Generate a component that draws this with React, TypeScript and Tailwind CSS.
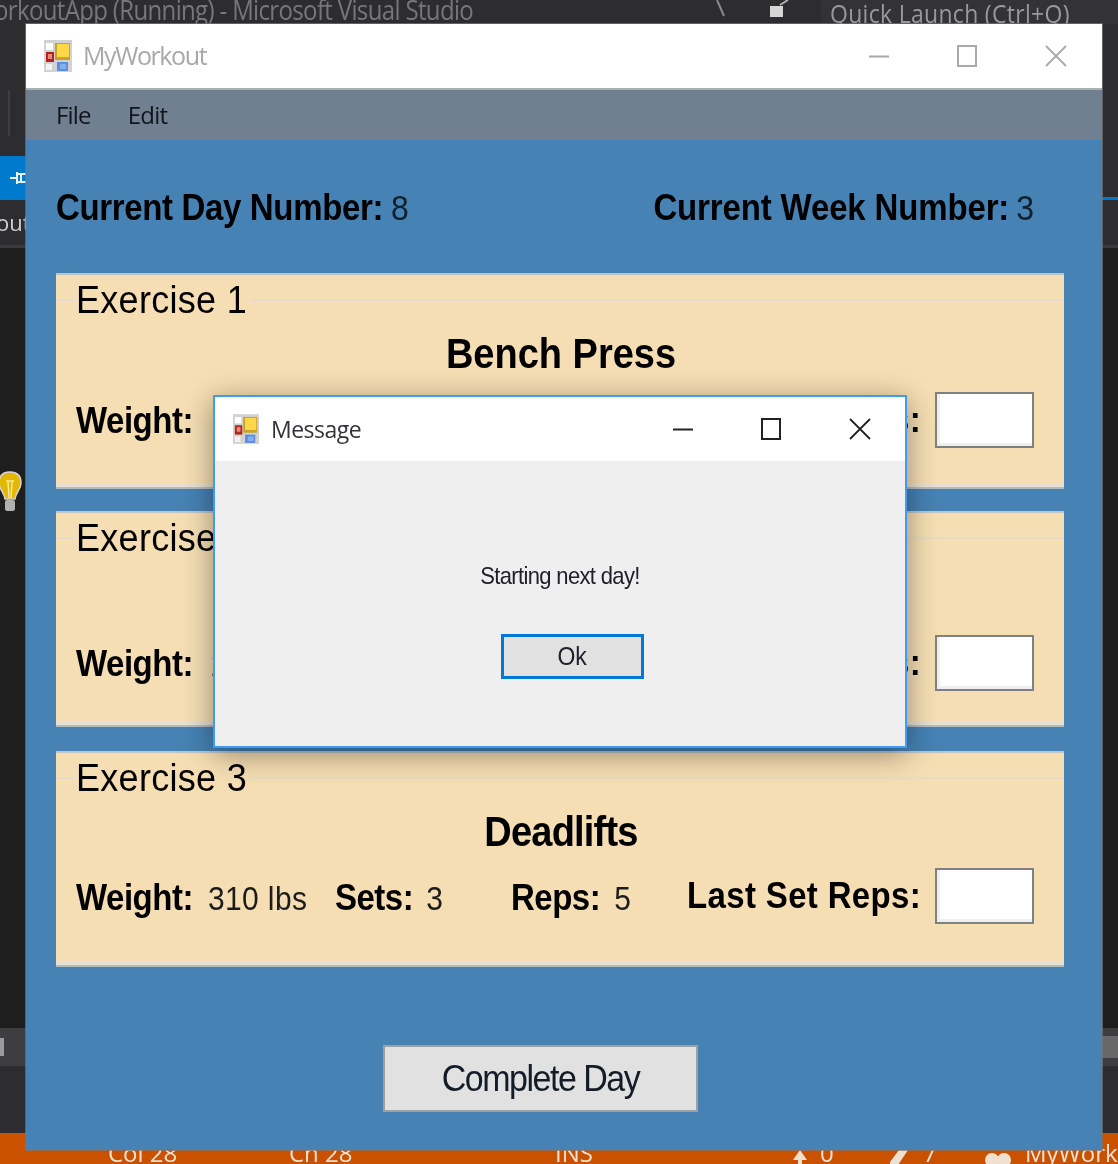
import React from "react";

const sans = "font-['Liberation_Sans',Arial,sans-serif]";
const segoe = "font-['Open_Sans','Noto_Sans',sans-serif]";
const tall = "inline-block scale-y-[1.1]";

function AppIcon({ className }: { className?: string }) {
  return (
    <svg viewBox="0 0 28 32" className={className}>
      <rect x="0" y="0" width="28" height="32" fill="#d2d2d2" />
      <rect x="2" y="3" width="7" height="7" fill="#ffffff" />
      <rect x="2" y="12" width="8" height="10" fill="#b3241c" />
      <rect x="4" y="14" width="4" height="5" fill="#e98a7c" />
      <rect x="2" y="24" width="6" height="6" fill="#f2f2f2" />
      <rect x="11" y="3" width="15" height="17" fill="#c9a227" />
      <rect x="13" y="4" width="12" height="13" fill="#ffd84a" />
      <rect x="13" y="22" width="11" height="9" fill="#5c8fe0" />
      <rect x="16" y="24" width="6" height="5" fill="#86aef0" />
    </svg>
  );
}

function WinControls({ dark }: { dark?: boolean }) {
  const c = dark ? "#222222" : "#a9a9a9";
  return (
    <div className="flex items-center">
      <svg viewBox="0 0 22 22" className="w-[22px] h-[22px]">
        <path d="M1 11.5H21" stroke={c} strokeWidth="2" />
      </svg>
      <svg viewBox="0 0 22 24" className="ml-[66px] w-[22px] h-[24px]">
        <rect x="2" y="2" width="18" height="20" fill="none" stroke={c} strokeWidth="2" />
      </svg>
      <svg viewBox="0 0 22 24" className="ml-[67px] w-[22px] h-[24px]">
        <path d="M1 2L21 22M21 2L1 22" stroke={c} strokeWidth="1.8" />
      </svg>
    </div>
  );
}

function Cell({ w, label, value, gap, top }: { w: string; label: string; value: string; gap: string; top: string }) {
  return (
    <div className={`flex items-baseline shrink-0 ${top} ${w}`}>
      <span className={`font-bold text-[33px] tracking-[-0.5px] text-black ${tall}`}>{label}</span>
      <span className={`text-[30px] tracking-[0.4px] text-[#1c1c1c] ${gap} ${tall}`}>{value}</span>
    </div>
  );
}

type Ex = {
  n: number;
  name: string;
  weight: string;
  sets: string;
  reps: string;
  rowTop: string;
  mb: string;
  wGap: string;
  track: string;
  top: string;
};

function ExerciseCard({ n, name, weight, sets, reps, rowTop, mb, wGap, track, top }: Ex) {
  return (
    <section
      className={`h-[216px] bg-[#f5deb3] border-t-2 border-t-[#bfc5c4] border-b-2 border-b-[#b5bcc0] shadow-[inset_0_-3px_0_#e8e0d0] flex flex-col ${mb}`}
    >
      <div className="flex items-center h-[50px]">
        <div className="w-[20px] h-[2px] bg-[#e6dccb]" />
        <span className={`text-[36px] leading-[50px] text-black tracking-[0.3px] ${tall}`}>Exercise {n}</span>
        <div className="flex-1 ml-[3px] h-[2px] bg-[#e6dccb]" />
      </div>
      <div className={`h-[54px] mt-[2px] pl-[2px] flex items-center justify-center font-bold text-[38px] leading-[54px] text-black ${track}`}>
        <span className={tall}>{name}</span>
      </div>
      <div className={`flex items-center pl-[20px] ${rowTop}`}>
        <Cell w="w-[259px]" label="Weight:" value={weight} gap={wGap} top={top} />
        <Cell w="w-[176px]" label="Sets:" value={sets} gap="ml-[13px]" top={top} />
        <Cell w="w-[176px]" label="Reps:" value={reps} gap="ml-[14px]" top={top} />
        <span className={`font-bold text-[33px] tracking-[0.35px] text-black w-[248px] shrink-0 whitespace-nowrap ${tall}`}>Last Set Reps:</span>
        <div className="w-[99px] h-[56px] bg-white border-2 border-[#808080] shadow-[inset_3px_-3px_0_#efefef] shrink-0" />
      </div>
    </section>
  );
}

function VsBackground() {
  return (
    <div className={`flex flex-col h-[1164px] overflow-hidden ${segoe}`}>
      <div className="h-[24px] bg-[#2d2d30] flex items-start overflow-hidden text-[#77777a] text-[24px] leading-[26px] whitespace-nowrap">
        <span className={`w-[716px] shrink-0 ml-[-6px] -mt-[3px] tracking-[-0.65px] ${tall}`}>orkoutApp (Running) - Microsoft Visual Studio</span>
        <svg viewBox="0 0 10 18" className="w-[10px] h-[18px] ml-[6px] shrink-0">
          <path d="M1 0L8 16" stroke="#8a8a8a" strokeWidth="2" />
        </svg>
        <svg viewBox="0 0 22 18" className="w-[22px] h-[18px] ml-[42px] shrink-0">
          <path d="M2 6h13v11H2z" fill="#d6d6d6" />
          <path d="M12 5L20 0" stroke="#b0b0b0" strokeWidth="2" />
        </svg>
        <div className="flex-1 h-full bg-[#333337] pl-[9px] ml-[31px] text-[#99999c] text-[23px] tracking-[0.3px] overflow-hidden">
          <span className={`-mt-[6px] ${tall}`}>Quick Launch (Ctrl+Q)</span>
        </div>
      </div>
      <div className="h-[132px] bg-[#2d2d30] pl-[8px] pt-[66px]">
        <div className="w-[2px] h-[46px] bg-[#3e3e42]" />
      </div>
      <div className="h-[44px] bg-[#2d2d30] flex justify-between">
        <div className="w-[26px] bg-[#007acc] flex items-center justify-end">
          <svg viewBox="0 0 16 16" className="w-[16px] h-[16px]">
            <path d="M0 8H7" stroke="#e8f2fa" strokeWidth="2" />
            <path d="M7 2V14M7 4H16M7 12H16M11 4V12" stroke="#e8f2fa" strokeWidth="2" fill="none" />
          </svg>
        </div>
        <div className="w-[17px] self-end h-[3px] bg-[#007acc]" />
      </div>
      <div className="h-[48px] bg-[#2d2d30] border-b-[3px] border-b-[#3a3a3d] text-[#d0d0d0] text-[22px] leading-[44px] whitespace-nowrap overflow-hidden">
        <span className="ml-[-4px]">out</span>
      </div>
      <div className="h-[780px] bg-[#1e1e1e] pt-[223px]">
        <svg viewBox="0 0 24 42" className="w-[24px] h-[42px] -ml-[2px]">
          <path d="M12 1C4 1 1 6 1 12c0 6 5 9 6 16h10c1-7 6-10 6-16 0-6-3-11-11-11z" fill="#e5b800" stroke="#d4d4d4" strokeWidth="1.5" />
          <path d="M8 10h8M10 10l1 17M14 10l-1 17" stroke="#f8e8a0" strokeWidth="1.5" fill="none" />
          <rect x="7" y="29" width="10" height="11" rx="2" fill="#b0b0b0" />
        </svg>
      </div>
      <div className="h-[38px] bg-[#3e3e42] flex justify-between items-center">
        <div className="w-[4px] h-[18px] bg-[#9a9a9a]" />
        <div className="w-[17px] h-[22px] bg-[#686868]" />
      </div>
      <div className="h-[67px] bg-[#2d2d30]" />
      <div className="flex-1 bg-[#ca5100] text-[#f0e0d0] text-[24px] leading-[30px] whitespace-nowrap flex items-start pt-[5px] overflow-hidden">
        <span className="ml-[108px] w-[181px] shrink-0">Col 28</span>
        <span className="w-[266px] shrink-0">Ch 28</span>
        <span className="w-[237px] shrink-0">INS</span>
        <div className="w-[97px] shrink-0 flex items-start gap-[12px]">
          <svg viewBox="0 0 16 30" className="w-[16px] h-[30px]">
            <path d="M8 12L15 22H10V30H6V22H1z" fill="#f0e0d0" />
          </svg>
          <span>0</span>
        </div>
        <div className="w-[95px] shrink-0 flex items-start gap-[12px]">
          <svg viewBox="0 0 22 30" className="w-[22px] h-[30px]">
            <path d="M16 4L21 9L7 30H1V24z" fill="#f0e0d0" />
          </svg>
          <span>7</span>
        </div>
        <div className="shrink-0 flex items-start gap-[13px]">
          <svg viewBox="0 0 28 30" className="w-[28px] h-[30px]">
            <circle cx="8" cy="22" r="7" fill="#f0e0d0" />
            <circle cx="20" cy="22" r="7" fill="#f0e0d0" />
          </svg>
          <span>MyWorkout</span>
        </div>
      </div>
    </div>
  );
}

function MainWindow() {
  return (
    <div className={`absolute left-[26px] top-[24px] w-[1076px] h-[1126px] flex flex-col shadow-[0_0_0_1px_rgba(120,120,120,0.7)] ${sans}`}>
      <div className="h-[64px] bg-white flex items-center pl-[18px] pr-[35px] border-b-[2px] border-b-[#a9b0b6] box-content">
        <AppIcon className="w-[28px] h-[32px]" />
        <span className={`ml-[11px] text-[#a8a8a8] text-[25px] tracking-[-1.4px] flex-1 ${segoe}`}>MyWorkout</span>
        <WinControls />
      </div>
      <div className={`h-[50px] bg-[#708090] flex items-center pl-[30px] gap-[37px] text-[#10141c] text-[24px] tracking-[-0.8px] ${segoe}`}>
        <span>File</span>
        <span>Edit</span>
      </div>
      <main className="flex-1 bg-[#4682b4] pl-[30px] pr-[38px] pt-[48px] flex flex-col">
        <div className="flex justify-between pr-[30px] h-[40px] items-center mb-[45px] text-black">
          <div className="flex items-baseline">
            <span className={`font-bold text-[33px] tracking-[-0.35px] ${tall}`}>Current Day Number:</span>
            <span className={`ml-[8px] text-[32px] text-[#10202c] ${tall}`}>8</span>
          </div>
          <div className="flex items-baseline">
            <span className={`font-bold text-[33px] tracking-[-0.15px] ${tall}`}>Current Week Number:</span>
            <span className={`ml-[7px] text-[32px] text-[#10202c] ${tall}`}>3</span>
          </div>
        </div>
        <ExerciseCard n={1} name="Bench Press" weight="185 lbs" sets="3" reps="5" rowTop="mt-[11px]" mb="mb-[22px]" wGap="ml-[21px]" track="tracking-[0px]" top="mt-[1px]" />
        <ExerciseCard n={2} name="Squats" weight="225 lbs" sets="3" reps="5" rowTop="mt-[16px]" mb="mb-[24px]" wGap="ml-[18px]" track="tracking-[-0.4px]" top="mt-[1px]" />
        <ExerciseCard n={3} name="Deadlifts" weight="310 lbs" sets="3" reps="5" rowTop="mt-[9px]" mb="mb-[78px]" wGap="ml-[15px]" track="tracking-[-0.8px]" top="mt-[3px]" />
        <button className="self-start ml-[327px] w-[315px] h-[67px] bg-[#e1e1e1] border-2 border-[#a0a0a0] text-[34px] tracking-[-1.5px] text-[#141c28]">
          <span className={tall}>Complete Day</span>
        </button>
      </main>
    </div>
  );
}

function Dialog() {
  return (
    <div className={`absolute left-[213px] top-[395px] w-[694px] h-[353px] border-2 border-[#3f9bf5] flex flex-col shadow-[0_6px_28px_rgba(0,0,0,0.4)] ${segoe}`}>
      <div className="h-[64px] bg-white flex items-center pl-[18px] pr-[34px] shrink-0">
        <AppIcon className="w-[26px] h-[30px]" />
        <span className="ml-[12px] flex-1 text-[23px] tracking-[-0.5px] text-[#33333a]">Message</span>
        <WinControls dark />
      </div>
      <div className="flex-1 bg-[#efefef] flex flex-col items-center pt-[100px]">
        <p className={`text-[22px] leading-[30px] tracking-[-0.65px] text-[#20202a] ${sans}`}>
          <span className={tall}>Starting next day!</span>
        </p>
        <button className={`mt-[43px] ml-[24px] w-[143px] h-[45px] bg-[#e1e1e1] border-[3px] border-[#0078d7] text-[23px] tracking-[-0.3px] text-[#20202a] ${sans}`}>
          <span className={tall}>Ok</span>
        </button>
      </div>
    </div>
  );
}

export default function App() {
  return (
    <div className="relative w-[1118px] h-[1164px] overflow-hidden bg-[#1e1e1e] blur-[0.5px]">
      <VsBackground />
      <MainWindow />
      <Dialog />
    </div>
  );
}
